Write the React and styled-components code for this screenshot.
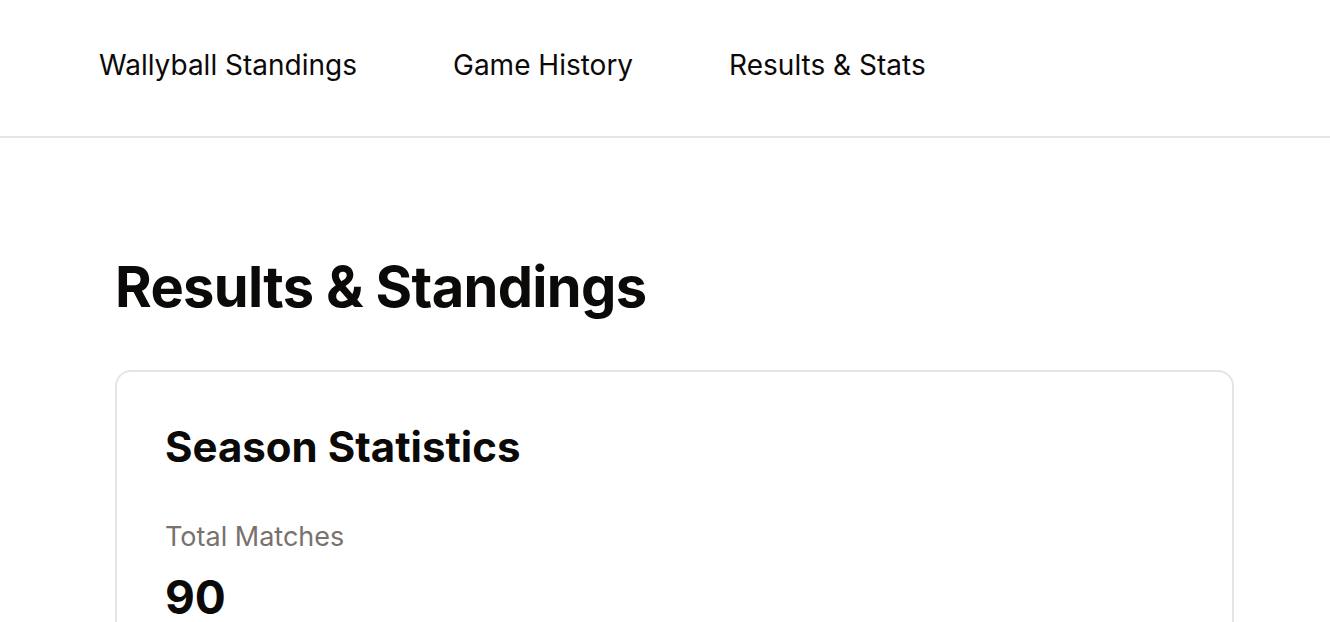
import styled, { createGlobalStyle } from 'styled-components';

const GlobalStyle = createGlobalStyle`
    body {
        margin:0;
        background:#ffffff;
        font-family: Inter, "Noto Sans", sans-serif;
        color:#0c0a09;
    }
`;

const NavBar = styled.nav`
    display:flex;
    align-items:center;
    gap:96px;
    height:136px;
    padding-left:99px;
    border-bottom:2px solid #e5e5e5;
`;

const NavLink = styled.a`
    font-size:28px;
    font-weight:400;
    color:#0c0a09;
    text-decoration:none;
    padding-bottom:7px;
`;

const Main = styled.main`
    padding:117px 96px 0 115px;
`;

const PageTitle = styled.h1`
    margin:0;
    font-size:56px;
    line-height:64px;
    font-weight:700;
    letter-spacing:-0.012em;
`;

const Card = styled.section`
    margin-top:51px;
    border:2px solid #e5e5e5;
    border-radius:16px;
    padding:49px 48px;
    min-height:400px;
`;

const CardTitle = styled.h2`
    margin:0;
    font-size:42px;
    line-height:52px;
    font-weight:700;
`;

const StatBlock = styled.div`
    margin-top:48px;
    display:flex;
    flex-direction:column;
    gap:18px;
`;

const StatLabel = styled.span`
    font-size:27px;
    line-height:32px;
    color:#78716c;
`;

const StatValue = styled.span`
    font-size:46px;
    line-height:52px;
    font-weight:700;
`;

const App = () => {
    return (
        <>
            <GlobalStyle />
            <NavBar>
                <NavLink href="#">Wallyball Standings</NavLink>
                <NavLink href="#">Game History</NavLink>
                <NavLink href="#">Results &amp; Stats</NavLink>
            </NavBar>
            <Main>
                <PageTitle>Results &amp; Standings</PageTitle>
                <Card>
                    <CardTitle>Season Statistics</CardTitle>
                    <StatBlock>
                        <StatLabel>Total Matches</StatLabel>
                        <StatValue>90</StatValue>
                    </StatBlock>
                </Card>
            </Main>
        </>
    );
};

export default App;
